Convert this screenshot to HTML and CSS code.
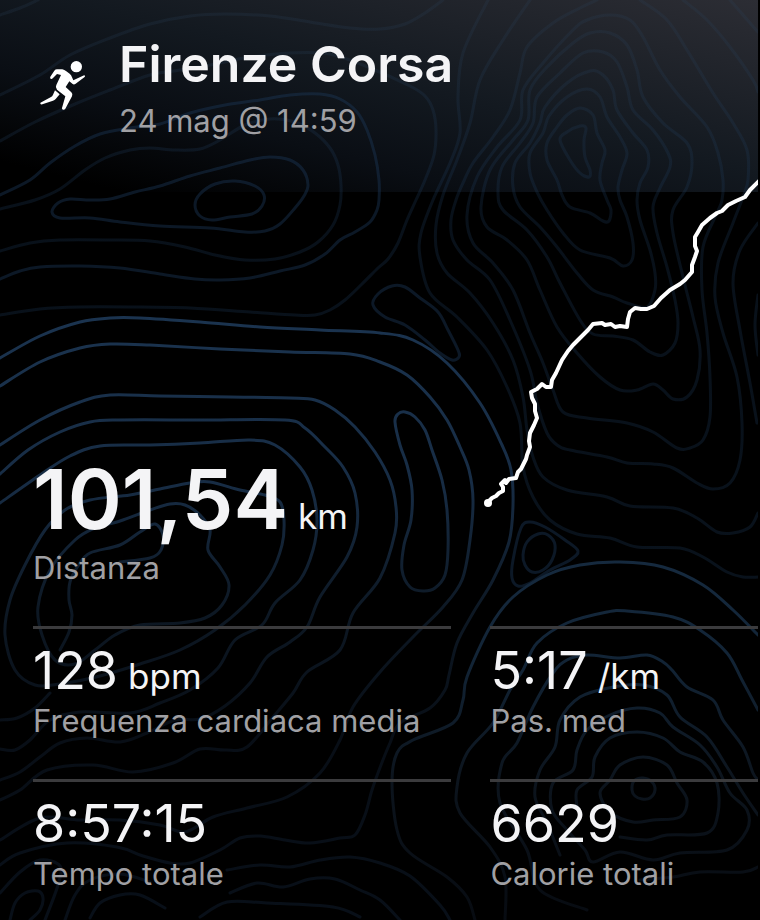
FILE: index.html
```html
<!DOCTYPE html>
<html lang="it">
<head>
<meta charset="utf-8">
<meta name="viewport" content="width=device-width, initial-scale=1">
<title>Firenze Corsa</title>
<link rel="stylesheet" href="styles.css">
</head>
<body>
<main class="activity">
  <svg class="map" viewBox="0 0 758 920" aria-hidden="true">
    <defs>
      <linearGradient id="ridge" gradientUnits="userSpaceOnUse" x1="0" y1="0" x2="0" y2="920">
        <stop offset="0" stop-color="#2a4058" stop-opacity=".22"/>
        <stop offset=".2" stop-color="#1d3a5a" stop-opacity=".28"/>
        <stop offset="1" stop-color="#1d3a5a" stop-opacity=".32"/>
      </linearGradient>
      <linearGradient id="west" gradientUnits="userSpaceOnUse" x1="0" y1="300" x2="0" y2="920">
        <stop offset="0" stop-color="#1b3450"/>
        <stop offset=".3" stop-color="#172c44"/>
        <stop offset=".5" stop-color="#0d1824"/>
        <stop offset=".7" stop-color="#080e16"/>
        <stop offset="1" stop-color="#080f18"/>
      </linearGradient>
      <linearGradient id="south" gradientUnits="userSpaceOnUse" x1="0" y1="520" x2="0" y2="920">
        <stop offset="0" stop-color="#172c42"/>
        <stop offset=".35" stop-color="#122436"/>
        <stop offset=".65" stop-color="#0c141d"/>
        <stop offset="1" stop-color="#070b11"/>
      </linearGradient>
    </defs>
    <g id="contours"></g>
    <path class="route" d="M488 502 L492 498 L496 496 L499 493 L503 491 L503 487 L501 484 L505 480 L506 483 L509 479 L516 478 L518 472 L521 469 L523 465 L526 459 L527 455 L530 447 L529 441 L530 433 L534 425 L537 418 L535 411 L535 404 L532 398 L531 392 L537 389 L542 384 L546 387 L551 387 L552 380 L556 373 L562 360 L568 351 L573 345 L581 337 L588 330 L593 324 L602 323 L605 325 L611 324 L615 327 L620 326 L627 327 L628 319 L630 312 L635 308 L641 309 L647 309 L654 306 L661 298 L670 290 L680 284 L685 280 L692 272 L692 265 L695 257 L697 251 L695 246 L695 237 L698 232 L702 225 L710 218 L717 213 L722 211 L728 205 L736 201 L745 197 L750 190 L760 180"/>
    <circle class="route-start" cx="488" cy="503" r="4"/>
  </svg>

  <header class="hero">
    <svg class="runner" viewBox="28 30 144 150" role="img" aria-label="Corsa">
      <circle cx="140" cy="50" r="17"/>
      <path d="M62 80 L74 62 Q77 58 82 58 L98 58 Q104 59 110 64 L120 71 Q125 75 127 82 L131 91 L160 77 Q164 75 166 77 Q167 79 164 82 L138 101 Q133 105 129 102 L119 94 L108 111 L125 127 Q130 132 127 139 L107 176 Q104 180 100 179 Q96 178 97 174 L107 139 L82 119 Q76 112 80 105 L94 75 L82 72 L70 84 Q66 88 63 86 Q60 84 62 80 Z"/>
      <path d="M76 121 L90 133 L78 147 Q75 151 70 152 L38 163 Q33 164 32 161 Q31 158 35 157 L64 141 Q68 139 70 134 Z"/>
    </svg>
    <div class="heading">
      <h1 class="title">Firenze Corsa</h1>
      <p class="when">24 mag @ 14:59</p>
    </div>
  </header>

  <dl class="stats">
    <div class="stat stat-main">
      <dd class="value">101,54 <span class="unit">km</span></dd>
      <dt class="label">Distanza</dt>
    </div>
    <div class="stat">
      <dd class="value">128 <span class="unit">bpm</span></dd>
      <dt class="label">Frequenza cardiaca media</dt>
    </div>
    <div class="stat">
      <dd class="value">5:17 <span class="unit">/km</span></dd>
      <dt class="label">Pas. med</dt>
    </div>
    <div class="stat">
      <dd class="value">8:57:15</dd>
      <dt class="label">Tempo totale</dt>
    </div>
    <div class="stat">
      <dd class="value">6629</dd>
      <dt class="label">Calorie totali</dt>
    </div>
  </dl>
</main>
<script src="contours.js"></script>
</body>
</html>
```
FILE: styles.css
```css
* {
  box-sizing: border-box;
}

body {
  margin: 0;
  background: #000;
  color: #f4f4f6;
  font-family: Inter, "Liberation Sans", sans-serif;
}

.activity {
  position: relative;
  min-height: 100vh;
  margin-right: 2px;
  overflow: hidden;
}

/* Terrain lines and route, drawn over the hero tint and under the text */
.map {
  position: absolute;
  top: 0;
  left: 0;
  width: 100%;
  height: auto;
}

.contour {
  fill: none;
  stroke-width: 3;
  stroke-linecap: round;
}

.ridge {
  stroke: url(#ridge);
}

.knoll {
  stroke: #1d3a5a;
  stroke-opacity: .42;
}

.west {
  stroke: url(#west);
}

.south {
  stroke: url(#south);
}

.route {
  fill: none;
  stroke: #fff;
  stroke-width: 4;
  stroke-linejoin: round;
}

.route-start {
  fill: #fff;
}

.hero {
  display: flex;
  align-items: flex-start;
  gap: 32px;
  min-height: 192px;
  padding: 34px 39px;
  background: linear-gradient(to top right, #000 8%, #0a0e14 32%, #131920 55%, #2c2d34 100%);
}

.runner {
  flex: none;
  width: 48px;
  height: 50px;
  margin-top: 26px;
  fill: #fff;
}

.runner,
.heading,
.stats {
  position: relative;
  z-index: 1;
}

.title,
.when,
.stats,
.value {
  margin: 0;
}

.title {
  font-size: 50px;
  font-weight: 600;
  line-height: 60px;
}

.when {
  margin-top: 7px;
  font-size: 31px;
  line-height: 40px;
  color: #a0a0a4;
}

.stats {
  display: grid;
  grid-template-columns: 61fr 39fr;
  column-gap: 39px;
  margin-top: 260px;
  padding: 0 0 26px 33px;
}

.stat {
  display: flex;
  flex-direction: column;
  padding: 12px 0 38px;
  border-top: 3px solid #3b3b3d;
  white-space: nowrap;
}

.stat-main {
  grid-column: 1 / -1;
  padding-top: 0;
  border-top: 0;
}

.stat:nth-last-child(-n+2) {
  padding-bottom: 0;
}

.value {
  display: flex;
  align-items: baseline;
  gap: 10px;
  font-size: 52px;
  line-height: 60px;
}

.stat-main .value {
  font-size: 82px;
  font-weight: 600;
  line-height: 96px;
}

.unit {
  font-size: 35px;
  font-weight: 400;
  line-height: 40px;
}

.label {
  font-size: 31px;
  line-height: 40px;
  color: #a0a0a4;
}
```
FILE: contours.js
```js
// Height lines as point lists; a trailing "z" closes the line.
const lines = {
  ridge: [
    "0,15 20,8 38,0",
    "0,95 40,75 70,55 110,38 150,24 190,16 225,14 270,16 310,22 350,28 380,29 405,24 425,13 443,0",
    "0,141 35,122 75,104 110,90 150,75 180,70 215,64 250,57 290,53 330,54 370,68 410,86 425,96 433,110 436,130 434,155 425,180 416,200 407,220 398,243 388,259 378,268 362,284 345,300 330,310 315,315 295,315 250,312 190,308 130,307 80,307 40,309 0,315",
    "0,251 30,243 60,240 110,240 150,241 185,247 215,255 245,260 275,259 300,252 318,242 333,225 340,205 341,185 338,165 330,148 315,133 295,122 270,119 245,125 220,140 200,149 175,150 150,148 130,150 105,158 85,170 60,189 35,200 0,209",
    "560,140 567,132 580,126 586,128 584,140 585,157 590,170 589,177 580,173 570,160 z",
    "557,180 547,160 547,143 557,127 567,115 580,108 593,115 597,133 605,150 602,163 600,180 607,200 611,210 609,221 603,221 590,213 570,207 562,195 z",
    "567,97 587,89 600,97 607,117 620,137 627,153 622,170 618,187 620,200 627,217 633,243 632,260 623,266 610,258 580,250 563,233 547,210 537,192 530,173 530,153 543,133 549,116 z",
    "513,187 515,163 530,143 540,123 545,107 567,83 590,71 603,75 613,90 617,110 633,133 647,150 648,167 640,183 637,200 640,220 650,250 655,273 655,290 647,307 627,303 613,297 593,290 577,273 557,247 540,227 520,207 z",
    "498,193 502,167 520,143 533,123 537,97 560,73 583,53 603,52 617,62 627,87 633,110 653,130 668,153 670,167 660,188 653,207 657,233 667,267 675,300 678,323 675,343 663,355 650,352 633,340 613,336 593,334 580,320 560,283 547,257 527,230 503,210 z",
    "481,207 490,170 513,140 528,120 530,90 547,67 573,43 590,33 610,33 627,45 637,70 643,97 663,123 687,143 692,163 687,187 673,210 673,233 683,277 693,317 700,350 697,380 687,397 673,399 663,390 653,384 637,390 620,390 600,377 577,353 557,327 540,290 527,260 507,240 487,227 z",
    "467,215 477,177 497,147 520,120 523,90 543,63 573,30 587,20 610,15 630,20 643,37 660,70 680,97 707,127 718,153 723,180 722,200 717,213 703,247 702,290 707,333 710,377 710,417 703,440 690,448 677,448 653,432 627,423 587,418 563,412 553,390 543,363 530,333 513,290 493,263 473,243 z",
    "597,0 580,8 553,23 527,47 520,73 510,110 493,137 473,163 463,183 456,200 451,220 453,240 467,260 490,280 510,320 530,370 537,403 547,433 557,445 570,450 607,457 627,463 653,464 673,468 697,483 713,489 730,483 740,460 742,423 737,377 723,333 715,297 718,263 733,223 743,197 748,180 747,150 733,123 713,93 687,50 667,20 640,0",
    "530,0 503,40 480,80 470,123 457,160 443,195 436,225 437,253 447,273 470,293 493,323 513,360 523,397 527,430 533,457 543,477 567,490 607,497 630,506 673,508 697,518 717,532 733,533 750,527 758,513",
    "488,0 463,53 458,97 460,133 450,163 433,200 421,233 420,257 430,293 457,317 487,350 507,387 520,423 523,467 533,497 550,520 577,534 610,538 637,547 680,548 703,557 727,572 743,577 758,577",
    "683,0 707,20 730,47 753,80 758,92",
    "730,0 750,23 758,32",
    "758,223 740,250 733,283 740,330 750,383 757,423",
    "758,295 755,325 758,355"
  ],
  knoll: [
    "0,195 30,180 50,163 75,146 100,134 130,128 160,124 190,113 225,105 260,100 290,95 320,94 340,99 357,112 367,130 375,155 379,180 379,200 377,210 370,222 355,232 340,240 325,254 305,265 280,271 250,278 220,280 195,279 160,274 120,268 80,266 40,267 20,271 0,279",
    "52,212 58,203 70,199 90,200 110,199 135,192 160,186 190,176 220,168 250,160 270,157 290,160 303,170 308,185 304,196 295,208 280,224 265,231 245,232 210,228 160,226 120,222 90,218 60,218 z",
    "195,205 200,194 215,184 235,181 255,186 264,195 262,206 252,214 230,217 212,220 200,216 z",
    "373,305 378,294 392,286 405,287 420,298 438,312 448,330 458,350 459,357 452,360 440,353 425,340 405,325 385,317 z",
    "521,528 530,522 545,527 565,540 578,551 570,560 550,570 530,583 518,586 512,578 513,560 z",
    "523,555 527,542 538,534 548,535 555,545 552,560 543,570 532,572 525,565 z"
  ],
  west: [
    "0,358 40,336 80,322 110,318 140,318 200,322 260,327 320,330 380,333 413,340 447,363 480,403 502,445 511,470 513,505 509,542 493,580 473,613 457,643 449,675 445,690 430,708 400,723 390,743 381,765 372,790 365,815 355,835 340,838 310,843 285,840 260,836 240,838 220,850 190,863 170,863 143,856 117,847 67,843 20,853 0,865",
    "0,386 40,362 80,348 110,344 150,345 220,349 290,352 350,354 380,362 407,375 430,397 447,420 460,447 469,470 473,500 470,540 462,580 443,607 413,637 380,672 353,707 340,740 320,773 287,797 247,808 213,817 185,832 160,825 120,820 80,820 40,818 0,840",
    "0,445 40,420 80,402 110,395 160,396 230,397 290,398 315,400 335,410 355,427 375,452 390,480 396,507 395,533 380,578 353,613 340,650 307,672 293,693 273,717 247,747 225,750 200,749 173,763 133,772 93,765 47,770 20,790 0,800",
    "0,474 28,450 60,432 90,422 120,420 200,420 285,420 305,428 325,447 343,467 355,493 357,527 347,557 320,597 307,627 290,642 267,657 250,683 225,706 200,719 175,720 147,733 120,742 87,738 60,743 40,757 20,772 0,780",
    "0,503 40,475 70,456 100,446 150,445 200,443 250,440 275,445 300,467 312,490 317,520 313,550 300,580 275,603 262,625 235,640 218,668 190,690 160,703 130,713 80,712 50,720 30,740 15,750 0,749",
    "5,635 10,600 25,565 45,530 65,510 90,500 130,495 160,489 190,483 210,482 240,490 265,495 280,502 284,520 282,545 270,575 245,605 215,630 180,650 140,664 100,676 60,684 35,685 15,670 z",
    "38,607 50,570 75,540 95,528 120,521 150,510 170,504 185,505 200,515 210,530 208,550 220,567 229,585 222,605 205,618 180,623 140,625 115,635 95,650 75,664 55,660 42,635 z",
    "60,650 69,632 72,615 69,600 70,582 78,566 90,553 120,545 140,532 155,524 163,535 161,550 150,558 120,562",
    "395,422 398,414 405,412 415,417 425,430 432,450 442,480 447,510 448,550 445,575 435,588 423,591 410,587 402,570 404,545 411,520 412,490 407,465 400,445 z",
    "0,720 17,718 35,708 50,693",
    "227,870 260,865 290,867 320,860 350,857 380,863 410,876 440,905 450,920",
    "230,893 257,883 283,887 310,879 335,879 360,890 380,900 400,920",
    "200,917 227,902 267,903 333,907 360,917",
    "10,920 15,903 25,893 38,891 43,898 40,910 30,920",
    "0,893 20,872 40,860 60,866 58,885 45,920",
    "65,920 75,895 90,880 120,874 150,882",
    "90,918 100,903 120,895 140,895 165,908"
  ],
  south: [
    "758,635 733,610 703,585 663,567 620,562 580,565 547,575 513,597 490,627 467,677 463,700 453,723 413,740 397,753 392,783 397,830 410,853 447,877 467,897 475,920",
    "758,710 742,680 727,653 700,630 673,617 627,611 607,612 567,623 537,643 523,670 510,690 493,723 467,753 457,787 460,813 490,847 505,877 505,920",
    "758,780 753,773 743,747 723,720 713,700 687,687 672,670 663,662 647,655 620,658 587,655 567,660 553,673 533,707 517,743 502,763 500,803 527,850 540,890 587,910",
    "758,815 743,793 727,767 707,737 680,717 667,695 643,685 613,687 580,697 560,720 555,747 540,770 535,797 547,823 560,855",
    "553,783 573,770 577,750 587,730 610,715 637,708 660,713 673,727 700,745 717,767 730,793 747,810 747,830 727,850 680,853 653,860 620,852 593,862 585,850 567,830 552,810 z",
    "577,807 577,790 592,777 595,757 610,738 637,732 663,738 680,752 703,762 717,783 718,813 707,833 667,835 647,840 620,837",
    "600,793 610,780 620,765 643,757 667,765 677,783 687,800 680,817 653,820 633,822 610,812 z",
    "632,790 634,781 643,778 652,782 655,790 650,798 642,799 635,796 z",
    "640,880 673,877 700,872 743,872 758,867"
  ]
};

// Smooth curve through every point
function spline(text) {
  const closed = text.endsWith("z");
  const pts = text.replace("z", "").trim().split(" ").map(p => p.split(",").map(Number));
  const n = pts.length;
  const at = i => closed ? pts[(i + n) % n] : pts[Math.max(0, Math.min(n - 1, i))];
  let d = `M${pts[0]}`;
  for (let i = 0; i < (closed ? n : n - 1); i++) {
    const [a, b, c, e] = [at(i - 1), at(i), at(i + 1), at(i + 2)];
    d += ` C${b[0] + (c[0] - a[0]) / 6},${b[1] + (c[1] - a[1]) / 6}`
       + ` ${c[0] - (e[0] - b[0]) / 6},${c[1] - (e[1] - b[1]) / 6} ${c}`;
  }
  return d;
}

const group = document.getElementById("contours");
for (const [kind, list] of Object.entries(lines)) {
  for (const text of list) {
    const path = document.createElementNS("http://www.w3.org/2000/svg", "path");
    path.setAttribute("class", `contour ${kind}`);
    path.setAttribute("d", spline(text));
    group.append(path);
  }
}
```
